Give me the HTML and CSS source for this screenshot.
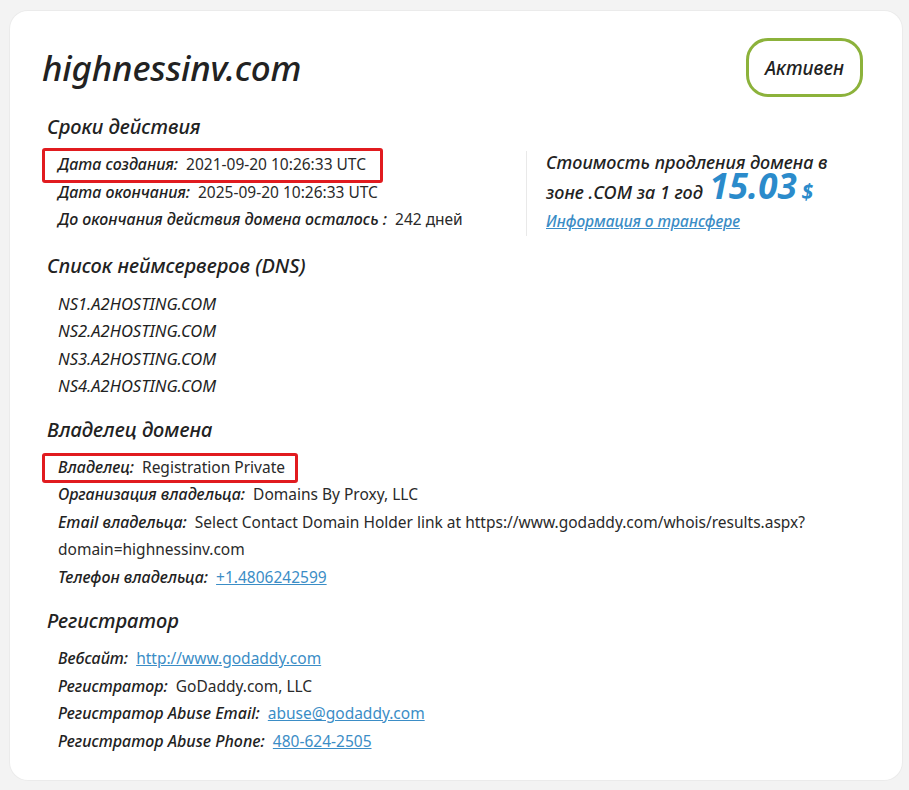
FILE: index.html
```html
<!DOCTYPE html>
<html lang="ru">
<head>
<meta charset="utf-8">
<title>highnessinv.com — Whois</title>
<link rel="stylesheet" href="styles.css">
</head>
<body>
<div class="card">
  <header class="card-head">
    <h1 class="domain">highnessinv.com</h1>
    <span class="status">Активен</span>
  </header>

  <section class="sec sec-first">
    <h2 class="sec-title">Сроки действия</h2>
    <div class="dates-wrap">
      <ul class="rows dates">
        <li class="row mark"><span class="lbl">Дата создания:</span><span class="val">2021-09-20 10:26:33 UTC</span></li>
        <li class="row"><span class="lbl">Дата окончания:</span><span class="val">2025-09-20 10:26:33 UTC</span></li>
        <li class="row"><span class="lbl">До окончания действия домена осталось :</span><span class="val">242 дней</span></li>
      </ul>
      <aside class="renew">
        <p class="renew-text">Стоимость продления домена в<br>зоне .COM за 1 год <span class="price">15.03</span> <span class="cur">$</span></p>
        <a class="renew-link" href="#">Информация о трансфере</a>
      </aside>
    </div>
  </section>

  <section class="sec">
    <h2 class="sec-title">Список неймсерверов (DNS)</h2>
    <ul class="rows ns">
      <li class="row">NS1.A2HOSTING.COM</li>
      <li class="row">NS2.A2HOSTING.COM</li>
      <li class="row">NS3.A2HOSTING.COM</li>
      <li class="row">NS4.A2HOSTING.COM</li>
    </ul>
  </section>

  <section class="sec">
    <h2 class="sec-title">Владелец домена</h2>
    <ul class="rows">
      <li class="row mark mark-b"><span class="lbl">Владелец:</span><span class="val">Registration Private</span></li>
      <li class="row"><span class="lbl">Организация владельца:</span><span class="val">Domains By Proxy, LLC</span></li>
      <li class="row"><span class="lbl">Email владельца:</span><span class="val">Select Contact Domain Holder link at https://www.godaddy.com/whois/results.aspx?<wbr>domain=highnessinv.com</span></li>
      <li class="row"><span class="lbl">Телефон владельца:</span><a class="val link" href="#">+1.4806242599</a></li>
    </ul>
  </section>

  <section class="sec">
    <h2 class="sec-title">Регистратор</h2>
    <ul class="rows">
      <li class="row"><span class="lbl">Вебсайт:</span><a class="val link" href="#">http://www.godaddy.com</a></li>
      <li class="row"><span class="lbl">Регистратор:</span><span class="val">GoDaddy.com, LLC</span></li>
      <li class="row"><span class="lbl">Регистратор Abuse Email:</span><a class="val link" href="#">abuse@godaddy.com</a></li>
      <li class="row"><span class="lbl">Регистратор Abuse Phone:</span><a class="val link" href="#">480-624-2505</a></li>
    </ul>
  </section>
</div>
</body>
</html>
```

FILE: styles.css
```css
html, body {
  margin: 0;
}

body {
  padding: 11px 7px 10px 10px;
  background: #f3f3f3;
  font-family: "Noto Sans", "DejaVu Sans", sans-serif;
  color: #222;
}

.card {
  width: 892px;
  box-sizing: border-box;
  background: #fff;
  border-radius: 18px;
  box-shadow: 0 0 0 1px #ebebeb;
  padding: 27px 39px 25px 32px;
}

.card-head {
  display: flex;
  justify-content: space-between;
  align-items: center;
  height: 59px;
}

.domain {
  margin: 0;
  font-size: 35px;
  font-style: italic;
  font-weight: 500;
  line-height: 1;
  color: #222;
  letter-spacing: -0.2px;
}

.status {
  box-sizing: border-box;
  width: 117px;
  height: 59px;
  border: 3px solid #8cb23b;
  border-radius: 22px;
  display: flex;
  align-items: center;
  justify-content: center;
  font-size: 19px;
  font-style: italic;
  font-weight: 500;
  color: #222;
}

.sec {
  margin-top: 16px;
}

.sec-title {
  margin: 0 0 10px 5px;
  font-size: 20px;
  font-style: italic;
  font-weight: 500;
  line-height: 28px;
  color: #222;
}

.rows {
  list-style: none;
  margin: 0;
  padding: 0 0 0 16px;
}

.row {
  line-height: 27.5px;
  font-size: 15.5px;
  color: #222;
}

.lbl {
  font-size: 16px;
  font-style: italic;
  font-weight: 500;
  margin-right: 8px;
}

.val {
  font-size: 15.5px;
  color: #2a2a2a;
}

.link {
  color: #3b8dc6;
  text-decoration: underline;
}

.mark {
  position: relative;
  width: fit-content;
}

.mark::before {
  content: "";
  position: absolute;
  top: -3px;
  bottom: -4px;
  left: -16px;
  right: -17px;
  border: 3px solid #e11b1f;
  border-radius: 3px;
}

.mark-b::before {
  top: -1px;
  bottom: -2px;
  right: -13px;
}

.dates-wrap {
  display: flex;
  align-items: flex-start;
}

.dates {
  box-sizing: border-box;
  width: 485px;
  border-right: 1px solid #e9e9e9;
  padding-bottom: 2px;
}

.renew {
  padding-left: 19px;
  margin-top: -4px;
}

.renew-text {
  margin: 0;
  font-size: 18px;
  font-style: italic;
  font-weight: 500;
  line-height: 30px;
  color: #222;
}

.price {
  font-size: 35px;
  font-weight: 700;
  line-height: 0;
  color: #2b8bcb;
  margin-left: 2px;
}

.cur {
  font-size: 21px;
  font-weight: 700;
  line-height: 0;
  color: #2b8bcb;
}

.renew-link {
  display: block;
  font-size: 15.5px;
  font-style: italic;
  font-weight: 500;
  line-height: 28px;
  color: #3b8dc6;
  text-decoration: underline;
}

.ns .row {
  font-size: 16.5px;
  font-style: italic;
  color: #222;
}
```
